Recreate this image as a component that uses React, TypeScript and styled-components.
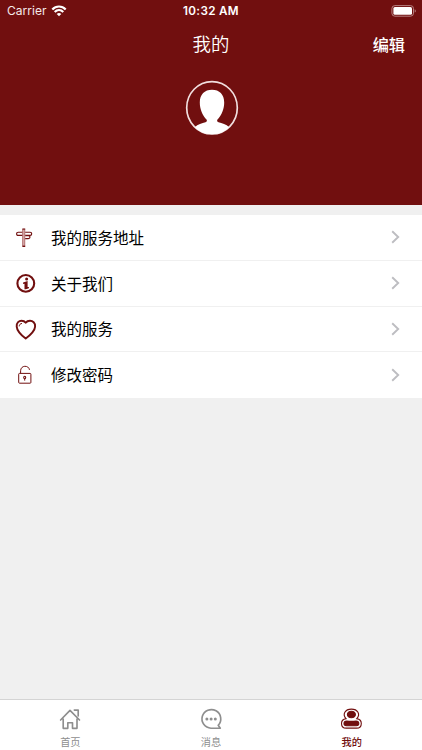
import React from "react";
import styled, { createGlobalStyle } from "styled-components";

const maroon = "#710f0f";

const GlobalStyle = createGlobalStyle`
  * { box-sizing: border-box; }
  body { margin: 0; background: #f0f0f0; }
  svg { display: block; }
`;

const Screen = styled.div`
  width: 100%;
  height: 750px;
  display: flex;
  flex-direction: column;
  overflow: hidden;
  background: #f0f0f0;
  font-family: "Inter", "Noto Sans CJK SC", sans-serif;
`;

const Header = styled.header`
  height: 205px;
  flex: none;
  background: ${maroon};
  color: #fff;
`;

const StatusBar = styled.div`
  height: 22px;
  padding: 0 5px 0 7px;
  display: grid;
  grid-template-columns: 1fr auto 1fr;
  align-items: center;
  line-height: 22px;
`;

const Carrier = styled.div`
  display: flex;
  align-items: center;
  gap: 4px;
  font-size: 12px;
  letter-spacing: 0.05px;
  color: #f5e9e9;
`;

const Clock = styled.div`
  margin-right: 2px;
  font-size: 11.7px;
  font-weight: 600;
  letter-spacing: 0.32px;
`;

const Battery = styled.svg`
  justify-self: end;
`;

const NavBar = styled.div`
  height: 44px;
  padding: 0 17px;
  display: grid;
  grid-template-columns: 1fr auto 1fr;
  align-items: center;
  line-height: 44px;
`;

const Title = styled.h1`
  grid-column: 2;
  margin: 0;
  font-size: 18.4px;
  font-weight: 350;
  line-height: inherit;
`;

const EditButton = styled.button`
  justify-self: end;
  padding: 0;
  border: 0;
  background: none;
  color: #fff;
  font: 500 16.2px/44px "Noto Sans CJK SC", sans-serif;
`;

const Avatar = styled.svg`
  margin: 14px auto 0;
  padding-left: 2px;
`;

const Menu = styled.main`
  margin-top: 10px;
  flex: none;
  background: #fff;
`;

const MenuRow = styled.div`
  height: 45.75px;
  padding: 0 22px 0 11px;
  display: flex;
  align-items: center;
  color: #000;
  font-size: 15.5px;
  line-height: 43px;
  border-bottom: 1px solid #f0f0f0;

  &:last-child { border-bottom-color: #fff; }
`;

const MenuLabel = styled.span`
  flex: 1;
  margin-left: 10px;
  padding-top: 2px;
`;

const TabBar = styled.nav`
  height: 51px;
  margin-top: auto;
  flex: none;
  display: grid;
  grid-template-columns: repeat(3, 1fr);
  background: #fff;
  border-top: 1px solid #d4d4d4;
`;

const Tab = styled.div<{ $active?: boolean }>`
  padding-top: 7px;
  display: flex;
  flex-direction: column;
  align-items: center;
  gap: 3px;
  color: ${(p) => (p.$active ? maroon : "#8e8e8e")};
  font-size: 10.2px;
  font-weight: ${(p) => (p.$active ? 500 : 400)};
  line-height: 16px;
`;

const WifiIcon = () => (
  <svg width="16" height="12" viewBox="0 0 15 12" fill="none" stroke="#fff" strokeWidth="2.2">
    <path d="M.8 4.4C4.6.5 10.4.5 14.2 4.4" />
    <path d="M3.2 7c2.5-2.4 6.1-2.4 8.6 0" />
    <path d="M7.5 11.2 5.2 9c1.3-1.2 3.3-1.2 4.6 0z" fill="#fff" stroke="none" />
  </svg>
);

const SignIcon = () => (
  <svg width="30" height="30" viewBox="0 -.5 30 30" fill="none" stroke={maroon} strokeWidth="1.15">
    <rect x="11.7" y="6.8" width="2.1" height="16.6" fill="#d9abab" stroke="#a65c5c" strokeWidth=".8" />
    <path d="M11.4 6.5h2.8M11.4 23.9h2.8" strokeWidth="1.2" />
    <path d="M11.3 9.7H7.2Q5.6 9.7 5.6 11.3T7.2 12.9h4.1M14.2 9.7h4.9q1.6 0 1.6 1.6t-1.6 1.6h-4.9M14.2 13.1h3.2q1.6 0 1.6 1.5t-1.6 1.5h-3.2" />
  </svg>
);

const InfoIcon = () => (
  <svg width="30" height="30" viewBox="0 -.2 30 30" fill="none" stroke={maroon}>
    <circle cx="14.8" cy="15.2" r="8.4" strokeWidth="2.1" />
    <ellipse cx="15.6" cy="10.8" rx="1.5" ry="1.6" fill={maroon} stroke="none" />
    <path d="m12.1 14.4 4.5-1.7v6l1.3.1v1.3l-3 .9h-1.4v-5.4l-1.4.2z" fill={maroon} stroke="none" />
  </svg>
);

const HeartIcon = () => (
  <svg width="30" height="30" viewBox="0 -.8 30 30" fill="none" stroke={maroon} strokeLinecap="round" strokeLinejoin="round">
    <path d="M14.7 23.8C11 20.9 6 16.4 5.7 11.8 5.4 8 8 5.9 10.5 5.9c1.8 0 3.3.7 4.2 2 .9-1.3 2.5-2 4.3-2 2.7 0 5.4 2.1 5.1 5.9-.3 4.6-5.4 8.9-9.4 12z" strokeWidth="1.9" />
    <path d="M8.2 11.2c.1-1.4 1-2.3 2.4-2.5" strokeWidth="1" />
  </svg>
);

const LockIcon = () => (
  <svg width="30" height="30" viewBox="0 -.4 30 30" fill="none" stroke={maroon} strokeWidth="1">
    <rect x="7.7" y="13" width="12.2" height="9.8" rx=".8" />
    <path d="M9.6 12.8V10.4c0-5.7 8.2-6 8.9-.9" />
    <ellipse cx="13.7" cy="17.1" rx="1" ry="1.2" strokeWidth="1.1" />
    <path d="M13.7 18.2v2" />
  </svg>
);

const Chevron = () => (
  <svg width="9" height="14" viewBox="0 0 9 14" fill="none" stroke="#bdbdc1" strokeWidth="1.9">
    <path d="m1.2 1.2 6 5.8-6 5.8" />
  </svg>
);

const HomeIcon = () => (
  <svg width="24" height="24" viewBox="0 0 24 24" fill="none" stroke="#8e8e8e" strokeWidth="1.65" strokeLinecap="round" strokeLinejoin="round">
    <path d="M2.6 13 12 3.4l9.5 9.6M5.2 12v9.3h4.6v-5.6h4.7v5.6H19V12M16.3 3.1h3.9V9" />
  </svg>
);

const ChatIcon = () => (
  <svg width="24" height="24" viewBox="0 0 24 24" fill="none" stroke="#8e8e8e" strokeWidth="1.65" strokeLinejoin="round">
    <path d="M19.2 18.3A9.4 9.3 0 1 0 12 21.2h9.3z" />
    <g fill="#8e8e8e" stroke="none">
      <circle cx="7.9" cy="12" r="1.5" />
      <circle cx="12.1" cy="12" r="1.5" />
      <circle cx="16.3" cy="12" r="1.5" />
    </g>
  </svg>
);

const ProfileIcon = () => (
  <svg width="24" height="24" viewBox=".6 .3 24 24" fill="none" stroke={maroon} strokeWidth="1.1">
    <path d="M6.6 11.9C2.7 7.7 5.6 2.4 12 2.4s9.3 5.3 5.4 9.5c3.1.5 4.5 2 4.5 4.8 0 3.3-1.5 4.7-4.7 4.7H6.8c-3.2 0-4.7-1.4-4.7-4.7 0-2.8 1.4-4.3 4.5-4.8z" />
    <ellipse cx="12" cy="7.8" rx="4" ry="3.3" fill={maroon} />
    <path d="M7.4 14.4q4.6.6 9.2 0c2 .1 2.8 1 2.8 2.4 0 1.6-.7 2.2-2.4 2.2H7c-1.7 0-2.4-.6-2.4-2.2 0-1.4.8-2.3 2.8-2.4z" fill={maroon} />
  </svg>
);

const menuItems = [
  { label: "我的服务地址", Icon: SignIcon },
  { label: "关于我们", Icon: InfoIcon },
  { label: "我的服务", Icon: HeartIcon },
  { label: "修改密码", Icon: LockIcon },
];

export default function App() {
  return (
    <Screen>
      <GlobalStyle />
      <Header>
        <StatusBar>
          <Carrier>Carrier <WifiIcon /></Carrier>
          <Clock>10:32 AM</Clock>
          <Battery width="26" height="12" viewBox="0 0 26 12">
            <rect x=".9" y=".6" width="21.6" height="10.6" rx="3" fill="none" stroke="#b78080" />
            <rect x="2.4" y="2.1" width="18.6" height="7.6" rx="1.5" fill="#fff" />
            <path d="M23.7 4.2c1.5.5 1.5 2.9 0 3.4z" fill="#b78080" />
          </Battery>
        </StatusBar>
        <NavBar>
          <Title>我的</Title>
          <EditButton>编辑</EditButton>
        </NavBar>
        <Avatar width="56" height="56" viewBox="0 0 54 56">
          <ellipse cx="27" cy="27.8" rx="25.3" ry="26.2" fill="none" stroke="#f1dfdf" strokeWidth="1.7" />
          <path d="M9.8 47.2c2.9-3.1 7.3-3.9 10.7-5 1.4-.5 1.6-1.3 1.2-2.5-4.5-4.6-6.9-10.7-6.9-17.2 0-8 4.8-12.7 12.2-12.7s12.2 4.7 12.2 12.7c0 6.5-2.4 12.6-6.9 17.2-.4 1.2-.2 2 1.2 2.5 3.4 1.1 7.8 1.9 10.7 5-4 4.2-9.7 7-17.2 7s-13.2-2.8-17.2-7z" fill="#fff" />
        </Avatar>
      </Header>
      <Menu>
        {menuItems.map(({ label, Icon }) => (
          <MenuRow key={label}>
            <Icon />
            <MenuLabel>{label}</MenuLabel>
            <Chevron />
          </MenuRow>
        ))}
      </Menu>
      <TabBar>
        <Tab><HomeIcon />首页</Tab>
        <Tab><ChatIcon />消息</Tab>
        <Tab $active><ProfileIcon />我的</Tab>
      </TabBar>
    </Screen>
  );
}
